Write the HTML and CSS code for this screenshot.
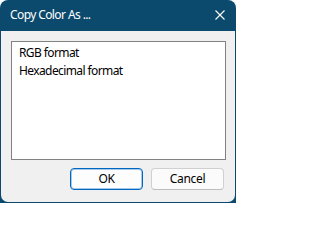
FILE: index.html
```html
<!DOCTYPE html>
<html>
<head>
<meta charset="utf-8">
<link rel="stylesheet" href="styles.css">
</head>
<body>
<div class="window">
  <div class="titlebar">
    <span class="title">Copy Color As ...</span>
    <svg class="close" width="10" height="10" viewBox="0 0 10 10">
      <path d="M0.5 0.5 L9.5 9.5 M9.5 0.5 L0.5 9.5" stroke="#ffffff" stroke-width="1.1" fill="none"/>
    </svg>
  </div>
  <div class="client">
    <div class="listbox">
      <div class="item">RGB format</div>
      <div class="item">Hexadecimal format</div>
    </div>
    <div class="buttons">
      <button class="btn default">OK</button>
      <button class="btn">Cancel</button>
    </div>
  </div>
</div>
</body>
</html>
```
FILE: styles.css
```css
html, body {
  margin: 0;
  padding: 0;
  background: #ffffff;
}
.window {
  width: 236px;
  height: 203px;
  background: #0b4a6d;
  border-radius: 8px 8px 0 0;
  display: flex;
  flex-direction: column;
  font-family: "Noto Sans", "Open Sans", sans-serif;
  font-size: 12px;
  letter-spacing: -0.6px;
}
.titlebar {
  height: 31px;
  flex: none;
  display: flex;
  align-items: center;
  padding: 0 11px 0 10px;
  color: #ffffff;
}
.title {
  flex: 1;
  line-height: 16px;
  margin-top: -1px;
}
.close {
  display: block;
  margin-top: -1px;
}
.client {
  flex: 1;
  margin: 0 1px 1px 1px;
  background: #f0f0f0;
  border-radius: 0 0 7px 7px;
  padding: 10px 11px 12px 10px;
  display: flex;
  flex-direction: column;
}
.listbox {
  width: 215px;
  height: 119px;
  box-sizing: border-box;
  border: 1px solid #828282;
  background: #ffffff;
  padding: 2px 0 0 7px;
  color: #000000;
}
.item {
  height: 17.5px;
  line-height: 17px;
  white-space: nowrap;
}
.buttons {
  margin-top: 8px;
  display: flex;
  justify-content: flex-end;
  gap: 8px;
}
.btn {
  width: 73px;
  height: 22px;
  box-sizing: border-box;
  font-family: inherit;
  font-size: 12px;
  letter-spacing: -0.3px;
  color: #000000;
  background: #fbfbfb;
  border: 1px solid #d0d0d0;
  border-bottom-color: #bdbdbd;
  border-radius: 4px;
  padding: 0;
  line-height: 18px;
}
.btn.default {
  background: #fdfdfd;
  border: 1px solid #0067c0;
  box-shadow: inset 0 0 0 1px rgba(0, 103, 192, 0.35);
}
```
